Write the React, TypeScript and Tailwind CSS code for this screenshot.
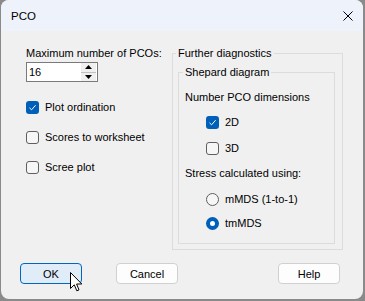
import React from "react";

const font = { fontFamily: '"Liberation Sans", Arial, sans-serif' };

const CheckBox = ({ checked }: { checked?: boolean }) =>
  checked ? (
    <span className="flex h-[13px] w-[13px] shrink-0 items-center justify-center rounded-[3px] bg-[#005fb8]">
      <svg width="9" height="9" viewBox="0 0 9 9">
        <path d="M1.5 4.8 L3.6 6.8 L7.6 2.2" fill="none" stroke="#fff" strokeWidth="1" />
      </svg>
    </span>
  ) : (
    <span className="h-[13px] w-[13px] shrink-0 rounded-[3px] border border-[#5f5f5f] bg-[#f6f6f6]" />
  );

const Radio = ({ checked }: { checked?: boolean }) =>
  checked ? (
    <span className="flex h-[13px] w-[13px] shrink-0 items-center justify-center rounded-full bg-[#005fb8]">
      <span className="h-[5px] w-[5px] rounded-full bg-white" />
    </span>
  ) : (
    <span className="h-[13px] w-[13px] shrink-0 rounded-full border border-[#5f5f5f] bg-[#f6f6f6]" />
  );

const Row = ({ children, label, className = "" }: { children: React.ReactNode; label: string; className?: string }) => (
  <div className={`flex h-[16px] items-center gap-[6px] whitespace-nowrap ${className}`}>
    {children}
    <span className="leading-[16px]">{label}</span>
  </div>
);

const Button = ({ label, primary, className = "" }: { label: string; primary?: boolean; className?: string }) => (
  <div
    className={`flex h-[21px] w-[62px] items-center justify-center rounded-[4px] border leading-[16px] ${
      primary ? "border-[#0067c0] bg-[#e0ecf8]" : "border-[#d0d0d0] bg-[#fdfdfd]"
    } ${className}`}
  >
    {label}
  </div>
);

export default function App() {
  return (
    <div className="flex h-[301px] w-[365px] bg-[#8a8a8a] text-[11px] text-black" style={font}>
      <div className="relative ml-[1px] flex h-[299px] w-[362px] flex-col overflow-hidden rounded-[8px] bg-[#f0f0f0]">
        {/* title bar */}
        <div className="flex h-[31px] items-center justify-between bg-[#eef2fa] pl-[10px] pr-[10px]">
          <span className="text-[11.5px] leading-[16px]">PCO</span>
          <svg width="10" height="10" viewBox="0 0 10 10">
            <path d="M0.5 0.5 L9.5 9.5 M9.5 0.5 L0.5 9.5" stroke="#000" strokeWidth="1" />
          </svg>
        </div>

        <div className="flex pl-[25px]">
          {/* left column */}
          <div className="flex w-[145px] flex-col whitespace-nowrap">
            <span className="mt-[14px] leading-[16px]">Maximum number of PCOs:</span>
            <div className="mt-[1px] flex h-[20px] w-[72px] items-center border border-[#7a7a7a] bg-white pl-[2px]">
              <span className="flex-1 leading-[16px]">16</span>
              <div className="mr-[1px] flex h-[18px] w-[15px] flex-col">
                <div className="flex flex-1 items-center justify-center border-b border-[#c0c0c0] bg-[#f0f0f0]">
                  <svg width="7" height="4" viewBox="0 0 7 4"><path d="M3.5 0 L7 4 L0 4 Z" fill="#000" /></svg>
                </div>
                <div className="flex flex-1 items-center justify-center bg-[#f0f0f0]">
                  <svg width="7" height="4" viewBox="0 0 7 4"><path d="M0 0 L7 0 L3.5 4 Z" fill="#000" /></svg>
                </div>
              </div>
            </div>
            <Row label="Plot ordination" className="mt-[17px]">
              <CheckBox checked />
            </Row>
            <Row label="Scores to worksheet" className="mt-[14px]">
              <CheckBox />
            </Row>
            <Row label="Scree plot" className="mt-[14px]">
              <CheckBox />
            </Row>
          </div>

          {/* further diagnostics */}
          <div className="ml-[1px] mt-[22px] flex h-[197px] w-[171px] flex-col border border-[#dcdcdc] whitespace-nowrap">
            <span className="-mt-[9px] ml-[3px] self-start bg-[#f0f0f0] px-[2px] leading-[16px]">Further diagnostics</span>
            <div className="ml-[5px] mt-[11px] flex h-[172px] w-[157px] flex-col border border-[#dcdcdc]">
              <span className="-mt-[9px] ml-[4px] self-start bg-[#f0f0f0] px-[2px] leading-[16px]">Shepard diagram</span>
              <div className="flex flex-col pl-[6px]">
                <span className="mt-[9px] leading-[16px]">Number PCO dimensions</span>
                <Row label="2D" className="ml-[21px] mt-[9px]">
                  <CheckBox checked />
                </Row>
                <Row label="3D" className="ml-[21px] mt-[10px]">
                  <CheckBox />
                </Row>
                <span className="mt-[9px] leading-[16px]">Stress calculated using:</span>
                <Row label="mMDS (1-to-1)" className="ml-[21px] mt-[10px]">
                  <Radio />
                </Row>
                <Row label="tmMDS" className="ml-[21px] mt-[8px]">
                  <Radio checked />
                </Row>
              </div>
            </div>
          </div>
        </div>

        {/* buttons */}
        <div className="mt-[13px] flex pl-[19px]">
          <Button label="OK" primary />
          <Button label="Cancel" className="ml-[34px]" />
          <Button label="Help" className="ml-[100px]" />
        </div>

        {/* mouse cursor */}
        <svg className="absolute left-[69px] top-[272px]" width="13" height="21" viewBox="0 0 13 21">
          <path
            d="M0.5 0.5 L0.5 16.5 L4.3 12.8 L6.8 18.8 L9 17.9 L6.6 12 L11.8 12 Z"
            fill="#fff"
            stroke="#000"
            strokeWidth="1"
            strokeLinejoin="round"
          />
        </svg>
      </div>
    </div>
  );
}
